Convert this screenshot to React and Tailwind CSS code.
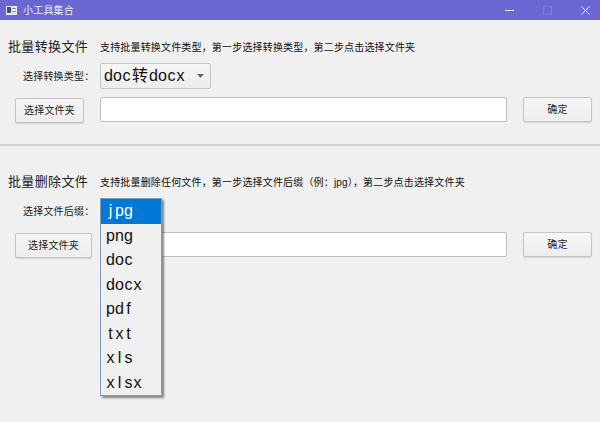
const options = ["jpg", "png", "doc", "docx", "pdf", "txt", "xls", "xlsx"];

// combo text sits on a fixed 9px cell per latin letter
function Cells({ text }) {
  return [...text].map((ch, i) =>
    /[a-z]/.test(ch) ? (
      <span key={i} className="inline-block w-[9px] text-center">{ch}</span>
    ) : (
      <span key={i} className="inline-block w-[18px] text-center">{ch}</span>
    )
  );
}

function PushButton({ children, className }) {
  return (
    <button className={`h-full rounded-[2px] border border-[#c4c4c4] bg-gradient-to-b from-[#f6f6f6] to-[#ededed] text-[10px] tracking-[0.2px] text-[#222] shadow-[0_1px_1px_rgba(0,0,0,0.12)] ${className}`}>
      {children}
    </button>
  );
}

function Section({ title, desc, label, combo, buttonWidth, className }) {
  return (
    <section className={`flex flex-col ${className}`}>
      <div className="flex h-[20px] items-center">
        <h2 className="ml-2 w-[92px] text-[13px] font-normal tracking-[0.35px] text-[#222]">{title}</h2>
        <p className="text-[10px] tracking-[0.17px] text-[#111]">{desc}</p>
      </div>
      <div className="mt-[6px] flex h-[26px] items-center">
        <span className="w-[100px] shrink-0 whitespace-nowrap pl-[23px] text-[10px] tracking-[0.2px] text-[#222]">{label}</span>
        {combo}
      </div>
      <div className="mt-[8px] flex h-[25px] items-stretch">
        <div className={`ml-[15px] ${buttonWidth}`}>
          <PushButton className="w-full">选择文件夹</PushButton>
        </div>
        <input className="ml-auto h-full w-[407px] rounded-[2px] border border-[#bdbdbd] bg-white" readOnly />
        <PushButton className="ml-4 mr-2 w-[69px]">确定</PushButton>
      </div>
    </section>
  );
}

export default function App() {
  return (
    <div className="flex h-[422px] w-[600px] flex-col overflow-hidden bg-[#f0f0f0] font-['Liberation_Sans','Noto_Sans_CJK_SC',sans-serif]">
      {/* title bar */}
      <header className="flex h-[20px] shrink-0 items-center bg-[#6a67d3] text-white">
        <svg className="ml-[6px]" width="11" height="9" viewBox="0 0 11 9">
          <rect width="11" height="9" fill="#e8e8f0" />
          <rect x="1" y="1" width="4" height="6" fill="#44506a" />
          <rect x="6" y="2" width="4" height="1" fill="#8a8fa8" />
          <rect x="6" y="5" width="4" height="1" fill="#8a8fa8" />
        </svg>
        <span className="ml-[6px] text-[10px] tracking-[0.2px] text-[#eeeefa]">小工具集合</span>
        <div className="ml-auto flex items-center">
          <span className="h-px w-[9px] bg-white" />
          <span className="ml-[29px] h-[9px] w-[9px] border border-[#7f7cdc]" />
          <svg className="ml-[29px] mr-[10px]" width="9" height="9" viewBox="0 0 9 9" stroke="white" strokeWidth="1">
            <path d="M0.5 0.5L8.5 8.5M8.5 0.5L0.5 8.5" />
          </svg>
        </div>
      </header>

      <Section
        className="mt-[17px]"
        title="批量转换文件"
        desc="支持批量转换文件类型，第一步选择转换类型，第二步点击选择文件夹"
        label="选择转换类型："
        buttonWidth="w-[69px]"
        combo={
          <div className="flex h-full w-[111px] items-center rounded-[2px] border border-[#c4c4c4] bg-gradient-to-b from-[#f6f6f6] to-[#ededed] pl-[3px] text-[16px] text-[#111]">
            <Cells text="doc转docx" />
            <svg className="ml-auto mr-[6px]" width="7" height="4" viewBox="0 0 7 4">
              <path d="M0 0H7L3.5 4Z" fill="#666" />
            </svg>
          </div>
        }
      />

      <hr className="mt-[22px] h-[2px] shrink-0 border-0 bg-[#d0d0d0]" />

      <Section
        className="mt-[26px]"
        title="批量删除文件"
        desc="支持批量删除任何文件，第一步选择文件后缀（例：jpg），第二步点击选择文件夹"
        label="选择文件后缀："
        buttonWidth="w-[77px]"
        combo={
          <div className="relative h-full w-[111px]">
            {/* open dropdown list */}
            <ul className="absolute left-0 top-0 z-10 h-[198px] w-[62px] border border-[#7f9db9] bg-[#f0f0f0] text-[16px] text-[#111] shadow-[2px_2px_2px_rgba(0,0,0,0.45)]">
              {options.map((opt, i) => (
                <li
                  key={opt}
                  className={`flex h-[24.5px] items-center pl-[5px] ${i === 0 ? "bg-[#0078d7] text-white" : ""}`}
                >
                  <Cells text={opt} />
                </li>
              ))}
            </ul>
          </div>
        }
      />
    </div>
  );
}
